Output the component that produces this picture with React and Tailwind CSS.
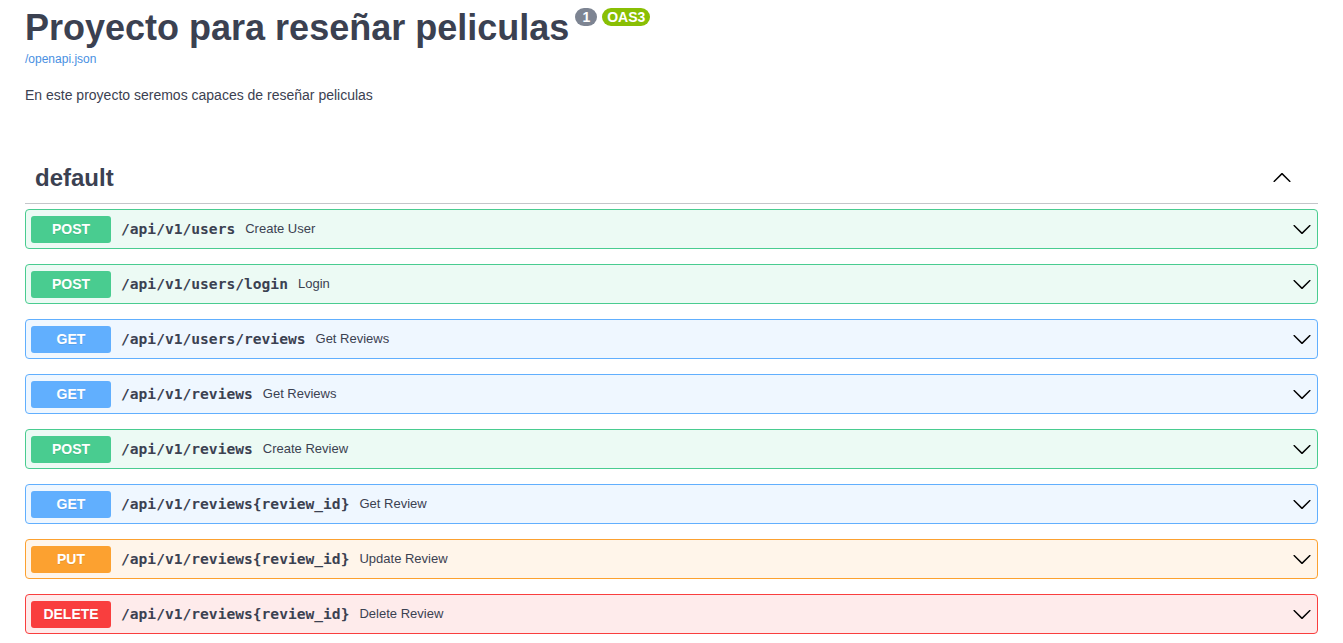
import React from "react";

const ops = [
  { m: "POST", path: "/api/v1/users", desc: "Create User" },
  { m: "POST", path: "/api/v1/users/login", desc: "Login" },
  { m: "GET", path: "/api/v1/users/reviews", desc: "Get Reviews" },
  { m: "GET", path: "/api/v1/reviews", desc: "Get Reviews" },
  { m: "POST", path: "/api/v1/reviews", desc: "Create Review" },
  { m: "GET", path: "/api/v1/reviews{review_id}", desc: "Get Review" },
  { m: "PUT", path: "/api/v1/reviews{review_id}", desc: "Update Review" },
  { m: "DELETE", path: "/api/v1/reviews{review_id}", desc: "Delete Review" },
];

const styles = {
  POST: { block: "border-[#49cc90] bg-[#49cc90]/10", badge: "bg-[#49cc90]" },
  GET: { block: "border-[#61affe] bg-[#61affe]/10", badge: "bg-[#61affe]" },
  PUT: { block: "border-[#fca130] bg-[#fca130]/10", badge: "bg-[#fca130]" },
  DELETE: { block: "border-[#f93e3e] bg-[#f93e3e]/10", badge: "bg-[#f93e3e]" },
};

function ArrowDown() {
  return (
    <svg width="20" height="20" viewBox="0 0 20 20" className="shrink-0">
      <path
        fill="#000"
        d="M17.418 6.109c.272-.268.709-.268.979 0s.271.701 0 .969l-7.908 7.83c-.27.268-.707.268-.979 0l-7.908-7.83c-.27-.268-.27-.701 0-.969.271-.268.709-.268.979 0L10 13.25l7.418-7.141z"
      />
    </svg>
  );
}

function ArrowUp() {
  return (
    <svg width="20" height="20" viewBox="0 0 20 20" className="shrink-0">
      <path
        fill="#000"
        d="M17.418 14.908c.272.268.709.268.979 0s.271-.701 0-.969l-7.908-7.83c-.27-.268-.707-.268-.979 0l-7.908 7.83c-.27.268-.27.701 0 .969.271.268.709.268.979 0L10 7.767l7.418 7.141z"
      />
    </svg>
  );
}

export default function App() {
  const sans = { fontFamily: '"Liberation Sans", Arial, sans-serif' };
  return (
    <div className="min-h-[643px] bg-white px-[25px] text-[#3b4151]" style={sans}>
      <div className="flex items-start">
        <h2 className="mt-[7px] text-[36px] font-bold leading-[41px] text-[#3b4151]">
          Proyecto para reseñar peliculas
        </h2>
        <span className="ml-[6px] mt-[8px] flex h-[18px] w-[22px] items-center justify-center rounded-full bg-[#7d8492] text-[14px] font-bold leading-none text-white">
          1
        </span>
        <span className="ml-[5px] mt-[8px] flex h-[18px] w-[48px] items-center justify-center rounded-full bg-[#89bf04] text-[14px] font-bold leading-none text-white">
          OAS3
        </span>
      </div>
      <div className="mt-[4px] text-[12px] leading-[14px] text-[#4990e2]">/openapi.json</div>
      <p className="mt-[19px] text-[14px] leading-[20px] text-[#3b4151]">
        En este proyecto seremos capaces de reseñar peliculas
      </p>

      <div className="mt-[45px]">
        <div className="flex items-center border-b border-[#3b4151]/30 pb-[10px] pl-[10px] pr-[26px] pt-[10px]">
          <div className="flex h-[33px] flex-1 items-center pt-[3px] text-[24px] font-bold text-[#3b4151]">default</div>
          <ArrowUp />
        </div>
        <div className="mt-[5px] flex flex-col gap-[15px]">
          {ops.map((o, i) => (
            <div
              key={i}
              className={`flex h-[40px] items-center rounded-[4px] border px-[5px] ${styles[o.m].block}`}
            >
              <span
                className={`flex h-[27px] w-[80px] shrink-0 items-center justify-center rounded-[3px] text-[14px] font-bold text-white ${styles[o.m].badge}`}
                style={{ textShadow: "0 1px 0 rgba(0,0,0,.1)" }}
              >
                {o.m}
              </span>
              <span
                className="px-[10px] text-[14.6px] font-bold text-[#3b4151]"
                style={{ fontFamily: '"DejaVu Sans Mono", "Liberation Mono", monospace' }}
              >
                {o.path}
              </span>
              <span className="flex-1 text-[13px] text-[#3b4151]">{o.desc}</span>
              <ArrowDown />
            </div>
          ))}
        </div>
      </div>
    </div>
  );
}
